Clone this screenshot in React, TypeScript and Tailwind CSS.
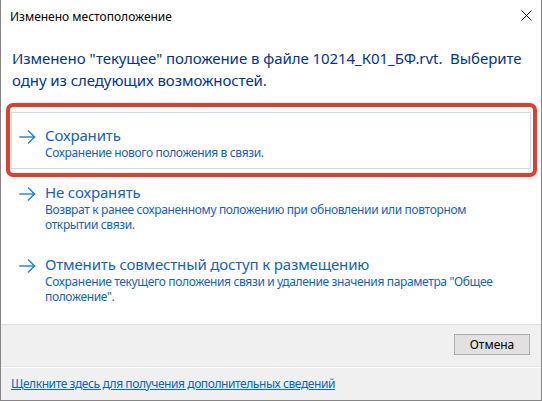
import React from "react";

const font = { fontFamily: '"Noto Sans", "Open Sans", sans-serif' };

function Arrow() {
  return (
    <svg width="17" height="14" viewBox="0 0 17 14" fill="none" stroke="#1f7fd6" strokeWidth="1.4" strokeLinecap="square">
      <path d="M1 7 H15.5" />
      <path d="M9.5 1 L15.5 7 L9.5 13" />
    </svg>
  );
}

interface LinkProps {
  title: string;
  lines: string[];
  hover?: boolean;
}

function CommandLink({ title, lines, hover }: LinkProps) {
  return (
    <div
      className={`flex ml-[10px] w-[520px] border pt-[12px] pb-[8px] ${
        hover ? "border-[#c7dcf2]" : "border-transparent"
      }`}
    >
      <div className="w-[33px] shrink-0 flex justify-end pr-[9px] pt-[3px] h-[20px] items-center">
        <Arrow />
      </div>
      <div className="flex flex-col text-[#1262bd]">
        <div className="text-[15px] leading-[20px] tracking-[-0.15px] whitespace-nowrap">{title}</div>
        {lines.map((l) => (
          <div key={l} className="text-[12px] leading-[15px] tracking-[-0.36px] whitespace-nowrap">
            {l}
          </div>
        ))}
      </div>
    </div>
  );
}

export default function App() {
  return (
    <div
      style={font}
      className="relative w-[542px] h-[401px] bg-white border-l border-r border-b border-[#858585] flex flex-col overflow-hidden"
    >
      {/* title bar */}
      <div className="h-[30px] shrink-0 flex items-center justify-between pl-[9px] pr-[9px]">
        <span className="text-[12px] text-black pt-[3px]">Изменено местоположение</span>
        <svg width="11" height="11" viewBox="0 0 11 11" stroke="#111" strokeWidth="1" className="mt-[1px]">
          <path d="M0.5 0.5 L10.5 10.5 M10.5 0.5 L0.5 10.5" />
        </svg>
      </div>

      {/* body */}
      <div className="h-[294px] shrink-0 flex flex-col">
        <div className="pl-[11px] pt-[17px] text-[15px] leading-[22px] tracking-[-0.06px] text-[#003399] whitespace-nowrap">
          Изменено "текущее" положение в файле 10214_К01_БФ.rvt.&nbsp; Выберите
          <br />
          одну из следующих возможностей.
        </div>
        <div className="mt-[21px] flex flex-col">
          <CommandLink hover title="Сохранить" lines={["Сохранение нового положения в связи."]} />
          <CommandLink
            title="Не сохранять"
            lines={[
              "Возврат к ранее сохраненному положению при обновлении или повторном",
              "открытии связи.",
            ]}
          />
          <CommandLink
            title="Отменить совместный доступ к размещению"
            lines={[
              'Сохранение текущего положения связи и удаление значения параметра "Общее',
              'положение".',
            ]}
          />
        </div>
      </div>

      {/* buttons */}
      <div className="h-[42px] shrink-0 bg-[#f0f0f0] border-t border-[#dfdfdf] flex justify-end items-start pt-[9px] pr-[11px]">
        <button className="w-[76px] h-[21px] bg-[#e1e1e1] border border-[#adadad] text-[12px] text-black leading-none">
          Отмена
        </button>
      </div>

      {/* footer link */}
      <div className="h-[34px] shrink-0 bg-[#f0f0f0] border-t border-[#e3e3e3] shadow-[inset_0_1px_0_#ffffff] flex items-center pl-[10px]">
        <span className="text-[12px] tracking-[-0.42px] text-[#0066cc] underline">
          Щелкните здесь для получения дополнительных сведений
        </span>
      </div>

      {/* annotation */}
      <div className="absolute left-[5px] top-[103px] w-[531px] h-[74px] border-4 border-[#e33d2f] rounded-[7px] pointer-events-none" />
    </div>
  );
}
